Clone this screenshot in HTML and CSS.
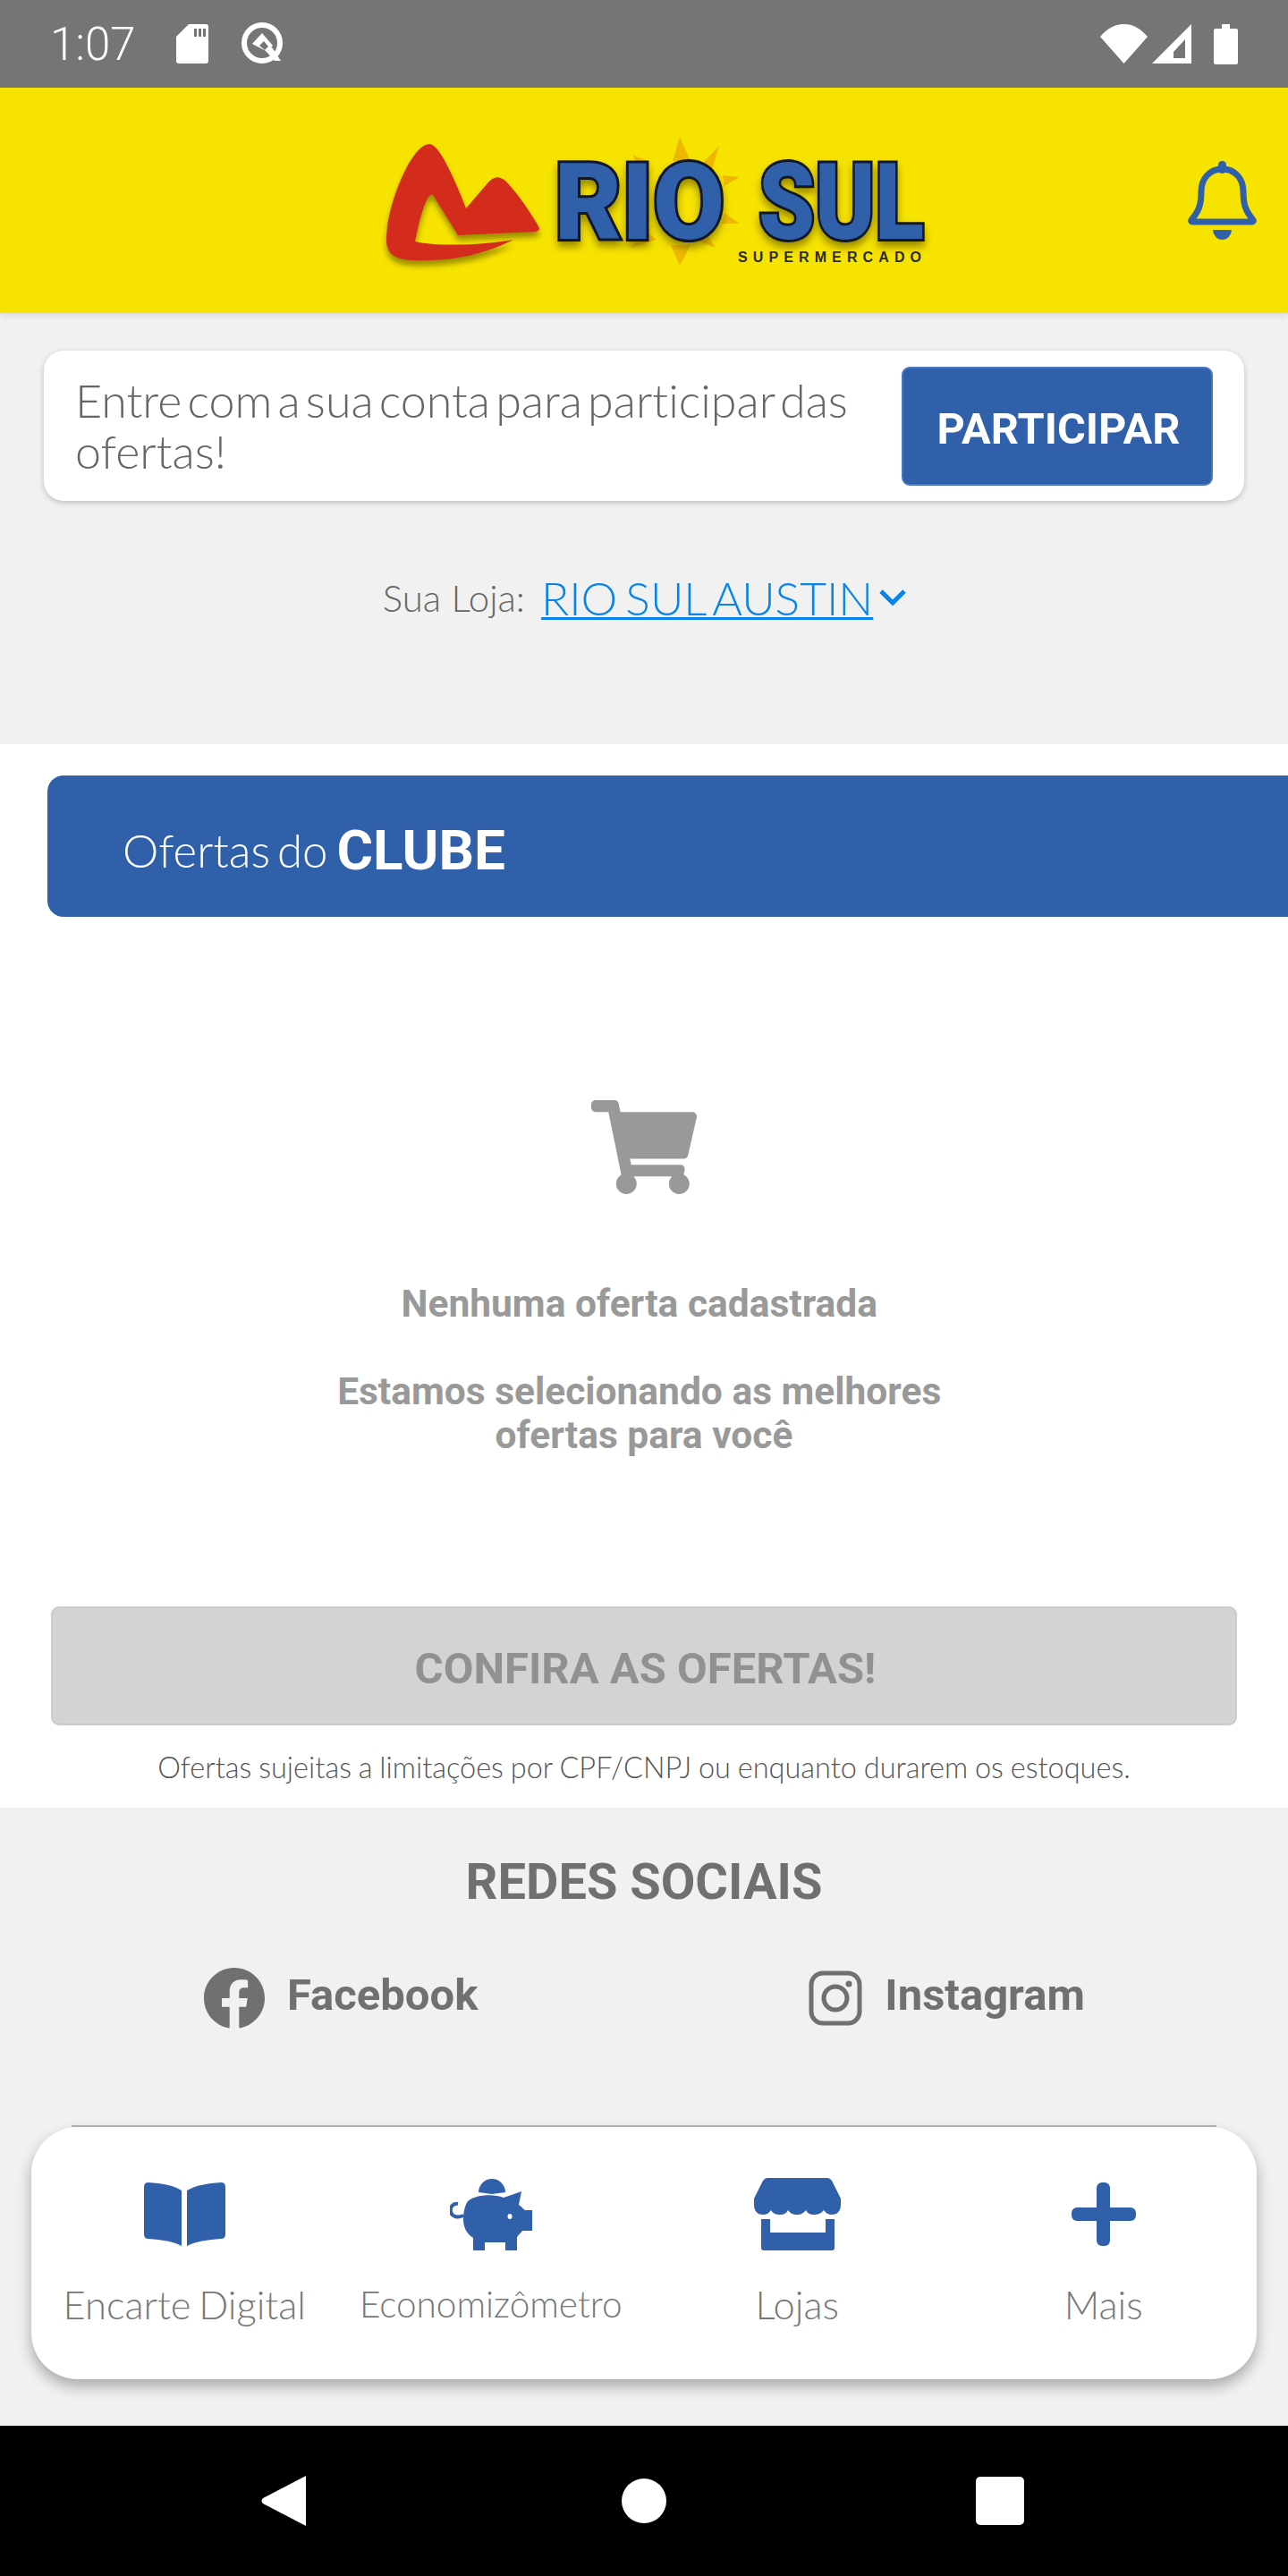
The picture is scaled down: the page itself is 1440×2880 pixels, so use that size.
FILE: index.html
```html
<!DOCTYPE html>
<html>
<head>
    <meta name="viewport" content="width=device-width, initial-scale=1.0">
    <title>Rio Sul Supermercado</title>
    <link rel="stylesheet" href="styles.css">
</head>
<body>
    <div class="statusbar">
        <span class="time">1:07</span>
        <svg class="sd-icon" viewBox="0 0 36 44"><path fill-rule="evenodd" d="M14 0H33a3 3 0 0 1 3 3V41a3 3 0 0 1-3 3H3a3 3 0 0 1-3-3V14zM20 5V14H23V5zM25 5V14H28V5zM30 5V14H33V5z" fill="#fff"/></svg>
        <svg class="q-icon" viewBox="0 0 50 50"><circle cx="25" cy="24" r="20" fill="none" stroke="#fff" stroke-width="6"/><path d="M25 13L37 27 31 34 14 25z" fill="#fff"/><path d="M22 27L27 22 32 28 28 32z" fill="#757575"/><path d="M29 33L39 44 46 44 36 29z" fill="#fff"/></svg>
        <div class="status-right">
            <svg class="wifi-icon" viewBox="0 0 53 44"><path d="M26.5 44L0 14C8 5 16 0 26.5 0S45 5 53 14z" fill="#fff"/></svg>
            <svg class="signal-icon" viewBox="0 0 44 44"><path fill-rule="evenodd" d="M44 0V44H0zM37 17L24 31V38H37z" fill="#fff"/></svg>
            <svg class="battery-icon" viewBox="0 0 27 45"><path d="M9 0H18V5H25a2 2 0 0 1 2 2V43a2 2 0 0 1-2 2H2a2 2 0 0 1-2-2V7a2 2 0 0 1 2-2H9z" fill="#fff"/></svg>
        </div>
    </div>

    <header class="topbar">
        <svg class="logo" viewBox="430 150 610 148">
            <defs>
                <filter id="soft" x="-10%" y="-20%" width="120%" height="140%"><feGaussianBlur stdDeviation="3"/></filter>
            </defs>
            <path d="M480 161C492 161 510 205 521 233L545 205C552 197 558 196 566 203C580 218 595 240 603 255Q604 258 598 259L512 263L484 218C478 214 470 240 464 270C490 276 540 274 574 268C550 280 520 290 480 291C450 292 432 290 432 268C432 230 460 161 480 161Z" transform="translate(0 6)" fill="#9c8f00" filter="url(#soft)"/>
            <g fill="#efb800">
                <path d="M752 180L760 153 772 180z"/>
                <path d="M786 182L804 163 796 190z"/>
                <path d="M808 196L827 198 810 208z"/>
                <path d="M810 238L827 250 806 250z"/>
                <path d="M790 262L800 277 782 270z"/>
                <path d="M750 274L760 297 772 274z"/>
                <path d="M722 258L705 277 734 268z"/>
                <path d="M724 180L707 173 718 192z"/>
            </g>
            <path d="M480 161C492 161 510 205 521 233L545 205C552 197 558 196 566 203C580 218 595 240 603 255Q604 258 598 259L512 263L484 218C478 214 470 240 464 270C490 276 540 274 574 268C550 280 520 290 480 291C450 292 432 290 432 268C432 230 460 161 480 161Z" fill="#d42c1c"/>
            <text class="logo-name" x="620" y="267" textLength="190" lengthAdjust="spacingAndGlyphs">RIO</text>
            <text class="logo-name" x="848" y="267" textLength="185" lengthAdjust="spacingAndGlyphs">SUL</text>
            <text class="logo-sub" x="825" y="293" textLength="205" lengthAdjust="spacing">SUPERMERCADO</text>
        </svg>
        <svg class="bell" viewBox="0 0 77 88">
            <path d="M38.500 9C24 9 15 20 15 34C15 50 12 56 4 66Q3 68 6 68H71Q74 68 73 66C65 56 62 50 62 34C62 20 53 9 38.500 9Z" fill="none" stroke="#3160aa" stroke-width="7" stroke-linejoin="round"/>
            <rect x="34" y="0" width="9" height="14" rx="4.500" fill="#3160aa"/>
            <path d="M28 77H49A10.500 11 0 0 1 28 77Z" fill="#3160aa"/>
        </svg>
    </header>

    <section class="account">
        <div class="login-card">
            <p>Entre com a sua conta para participar das ofertas!</p>
            <button class="btn-join">PARTICIPAR</button>
        </div>
        <div class="store-line">
            <span class="store-label">Sua Loja:</span>
            <a class="store-link">RIO SUL AUSTIN</a>
            <svg class="chevron" viewBox="0 0 32 20"><path d="M3 3L16 16 29 3" fill="none" stroke="#0a84e8" stroke-width="5"/></svg>
        </div>
    </section>

    <section class="offers">
        <div class="banner">
            <span class="banner-light">Ofertas do</span>
            <span class="banner-bold">CLUBE</span>
        </div>
        <div class="empty">
            <svg class="cart" viewBox="0 0 576 512"><path d="M528.12 301.319l47.273-208C578.806 78.301 567.391 64 551.99 64H159.208l-9.166-44.81C147.758 8.021 137.93 0 126.529 0H24C10.745 0 0 10.745 0 24v16c0 13.255 10.745 24 24 24h69.883l70.248 343.435C147.325 417.1 136 435.222 136 456c0 30.928 25.072 56 56 56s56-25.072 56-56c0-15.674-6.447-29.835-16.824-40h209.647C430.447 426.165 424 440.326 424 456c0 30.928 25.072 56 56 56s56-25.072 56-56c0-22.172-12.888-41.332-31.579-50.405l5.517-24.276c3.413-15.018-8.002-29.319-23.403-29.319H218.117l-6.545-32h293.145c11.206 0 20.92-7.754 23.403-18.681z" fill="#999"/></svg>
            <p class="empty-title">Nenhuma oferta cadastrada&nbsp;</p>
            <p class="empty-text">Estamos selecionando as melhores&nbsp;<br>ofertas para você</p>
        </div>
        <button class="btn-offers">CONFIRA AS OFERTAS!</button>
        <p class="disclaimer">Ofertas sujeitas a limitações por CPF/CNPJ ou enquanto durarem os estoques.</p>
    </section>

    <section class="social">
        <h2>REDES SOCIAIS</h2>
        <div class="social-links">
            <a class="social-link fb">
                <svg class="fb-icon" viewBox="8 8 496 496"><path d="M504 256C504 119 393 8 256 8S8 119 8 256c0 123.780 90.690 226.380 209.250 245V327.690h-63V256h63v-54.640c0-62.150 37-96.480 93.670-96.480 27.140 0 55.520 4.840 55.520 4.840v61h-31.280c-30.800 0-40.410 19.120-40.410 38.730V256h68.780l-11 71.690h-57.780V501C413.310 482.380 504 379.780 504 256z" fill="#707070"/></svg>
                <span>Facebook</span>
            </a>
            <a class="social-link ig">
                <svg class="ig-icon" viewBox="0 0 60 62"><rect x="3" y="3" width="54" height="56" rx="13" fill="none" stroke="#707070" stroke-width="5"/><circle cx="30" cy="31" r="13" fill="none" stroke="#707070" stroke-width="5"/><circle cx="45" cy="15" r="3.500" fill="#707070"/></svg>
                <span>Instagram</span>
            </a>
        </div>
        <div class="social-rule"></div>
    </section>

    <nav class="tabs">
        <a class="tab">
            <svg class="tab-icon" viewBox="0 -5 91 81"><path d="M5 0C20 1 33 3 42 9V71C33 66 20 64 5 63Q0 63 0 58V5Q0 0 5 0Z" fill="#3160aa"/><path d="M86 0C71 1 58 3 48 9V71C58 66 71 64 86 63Q91 63 91 58V5Q91 0 86 0Z" fill="#3160aa"/></svg>
            <span class="tab-wide">Encarte Digital</span>
        </a>
        <a class="tab">
            <svg class="tab-icon" viewBox="0 0 92 81"><path d="M32 16A15 15 0 0 1 62 16L47 18Z" fill="#3160aa"/><path d="M20 26C30 18 50 18 60 22L80 15 77 30C81 33 84 37 85 36H92V59H81C78 63 75 65 75 67V81H62V72H39V81H26V67C18 62 15 54 15 46C15 38 17 30 20 26Z" fill="#3160aa"/><path d="M9 29C3 28 0 33 1 38 2 43 8 45 15 42" fill="none" stroke="#3160aa" stroke-width="4"/><ellipse cx="67" cy="43" rx="2.500" ry="3" fill="#fff"/></svg>
            <span class="tab-small">Economizômetro</span>
        </a>
        <a class="tab">
            <svg class="tab-icon" viewBox="0 0 97 81"><path d="M15 0H82Q85 0 87 3L97 23V30C97 38 92 41 87 41 83 41 80 39 78 36 75 40 71 41 67 41 63 41 60 40 58 36 55 40 52 41 48 41 44 41 41 40 38 36 36 40 33 41 29 41 25 41 21 40 19 36 17 39 14 41 10 41 5 41 0 38 0 30V23L10 3Q12 0 15 0Z" fill="#3160aa"/><path d="M8 46H18V61H80V46H90V78Q90 81 87 81H11Q8 81 8 78Z" fill="#3160aa"/></svg>
            <span>Lojas</span>
        </a>
        <a class="tab">
            <svg class="tab-icon" viewBox="0 -5 72 81"><rect x="28" y="0" width="15" height="71" rx="6" fill="#3160aa"/><rect x="0" y="28" width="72" height="15" rx="6" fill="#3160aa"/></svg>
            <span>Mais</span>
        </a>
    </nav>

    <div class="navbar">
        <svg class="nav-back" viewBox="0 0 50 56"><path d="M50 0V56L2 31Q-1 28 2 25Z" fill="#fff"/></svg>
        <div class="nav-home"></div>
        <div class="nav-recent"></div>
    </div>
</body>
</html>
```

FILE: styles.css
```css
body {
    margin: 0;
    width: 1440px;
    height: 2880px;
    position: relative;
    overflow: hidden;
    display: flex;
    flex-direction: column;
    font-family: Lato, sans-serif;
    font-weight: 300;
    font-variant-ligatures: none;
    background-color: #f1f1f1;
}
p, h2 {
    margin: 0;
}
svg {
    display: block;
    flex: none;
}

.statusbar {
    height: 98px;
    background: #757575;
    display: flex;
    align-items: center;
    padding: 0 56px 0 56px;
    color: #fff;
}
.time {
    font-family: Roboto, sans-serif;
    font-size: 51px;
    font-weight: 300;
    width: 141px;
}
.sd-icon {
    width: 36px;
    height: 44px;
    margin-right: 35px;
}
.q-icon {
    width: 50px;
    height: 50px;
}
.status-right {
    margin-left: auto;
    display: flex;
    align-items: center;
}
.wifi-icon {
    width: 53px;
    height: 44px;
    margin-right: 5px;
}
.signal-icon {
    width: 44px;
    height: 44px;
    margin-right: 25px;
}
.battery-icon {
    width: 27px;
    height: 45px;
}

.topbar {
    height: 252px;
    background: #f7e300;
    display: flex;
    align-items: center;
    justify-content: space-between;
    padding: 0 35px 0 430px;
    box-shadow: 0 2px 8px rgba(0, 0, 0, 0.12);
    position: relative;
}
.logo {
    width: 610px;
    height: 148px;
    overflow: visible;
}
.logo-name {
    font-family: Roboto, sans-serif;
    font-weight: 900;
    font-size: 118px;
    fill: #3160aa;
    stroke: #101828;
    stroke-width: 6px;
    paint-order: stroke;
    filter: drop-shadow(0 6px 4px rgba(90, 80, 0, 0.6));
}
.logo-sub {
    font-family: "Liberation Sans Narrow", "Liberation Sans", sans-serif;
    font-weight: 700;
    font-size: 16px;
    fill: #2a2a20;
}
.bell {
    width: 77px;
    height: 88px;
}

.account {
    height: 482px;
    box-sizing: border-box;
    padding: 42px 49px 0;
}
.login-card {
    height: 168px;
    box-sizing: border-box;
    background: #fff;
    border-radius: 22px;
    box-shadow: 0 2px 6px rgba(0, 0, 0, 0.22);
    display: flex;
    align-items: center;
    justify-content: space-between;
    padding: 0 35px;
}
.login-card p {
    width: 890px;
    font-size: 52px;
    word-spacing: -8px;
    line-height: 57px;
    color: #666;
}
.btn-join {
    width: 348px;
    height: 133px;
    padding: 6px 0 0 3px;
    background: #3160aa;
    border: 2px solid #4a78c0;
    border-radius: 9px;
    color: #fff;
    font-family: Roboto, sans-serif;
    font-weight: 700;
    font-size: 48.700px;
}
.store-line {
    margin-top: 77px;
    display: flex;
    justify-content: center;
    align-items: center;
    margin-left: 2px;
}
.store-label {
    font-size: 42px;
    color: #666;
    margin-right: 18px;
}
.store-link {
    font-size: 51.500px;
    word-spacing: -5px;
    color: #0a84e8;
    text-decoration: underline;
    text-decoration-thickness: 3px;
}
.chevron {
    width: 32px;
    height: 20px;
    margin-left: 6px;
}

.offers {
    height: 1189px;
    background: #fff;
    box-sizing: border-box;
    padding-top: 35px;
}
.banner {
    margin-left: 53px;
    height: 158px;
    box-sizing: border-box;
    background: #3160aa;
    border-radius: 18px 0 0 18px;
    color: #fff;
    display: flex;
    align-items: center;
    padding: 8px 0 0 84px;
    gap: 10px;
}
.banner-light {
    font-size: 51px;
    word-spacing: -6px;
}
.banner-bold {
    font-family: Roboto, sans-serif;
    font-weight: 700;
    font-size: 62px;
}
.empty {
    display: flex;
    flex-direction: column;
    align-items: center;
    height: 771px;
    box-sizing: border-box;
    padding-top: 205px;
    font-family: Roboto, sans-serif;
    font-weight: 700;
    font-size: 42.500px;
    color: #999;
    text-align: center;
}
.cart {
    width: 118px;
    height: 105px;
}
.empty-title {
    margin-top: 98px;
    line-height: 49px;
}
.empty-text {
    margin-top: 49px;
    line-height: 49px;
}
.btn-offers {
    display: block;
    width: 1326px;
    height: 133px;
    margin: 0 0 0 57px;
    padding: 6px 0 0 3px;
    background: #d3d3d3;
    border: 2px solid #cbcbcb;
    border-radius: 9px;
    color: #919191;
    font-family: Roboto, sans-serif;
    font-weight: 700;
    font-size: 49px;
}
.disclaimer {
    margin-top: 27px;
    text-align: center;
    font-size: 32.500px;
    word-spacing: -1px;
    color: #555;
}

.social {
    flex: 1;
    display: flex;
    flex-direction: column;
    align-items: center;
    padding-top: 50px;
}
.social h2 {
    font-family: Roboto, sans-serif;
    font-weight: 700;
    font-size: 56px;
    color: #707070;
}
.social-links {
    width: 1440px;
    display: flex;
    margin-top: 63px;
}
.social-link {
    display: flex;
    align-items: center;
    font-family: Roboto, sans-serif;
    font-weight: 700;
    font-size: 49px;
    color: #707070;
}
.social-link span {
    margin-bottom: 8px;
}
.fb {
    margin-left: 228px;
    gap: 25px;
}
.ig {
    margin-left: 370px;
    gap: 25px;
}
.fb-icon {
    width: 68px;
    height: 68px;
}
.ig-icon {
    width: 60px;
    height: 62px;
}
.social-rule {
    width: 1280px;
    border-top: 2px solid #b5b5b5;
    margin-top: 108px;
}

/* floats over the social block */
.tabs {
    position: absolute;
    left: 35px;
    top: 2378px;
    width: 1370px;
    height: 282px;
    background: #fff;
    border-radius: 52px;
    box-shadow: 0 8px 16px rgba(0, 0, 0, 0.3);
    display: grid;
    grid-template-columns: repeat(4, 1fr);
}
.tab {
    display: flex;
    flex-direction: column;
    align-items: center;
    font-size: 43.500px;
    color: #777;
    padding-top: 57px;
}
.tab-icon {
    height: 81px;
}
.tab span {
    margin-top: 34px;
}
.tab .tab-wide {
    word-spacing: -3px;
}
.tab .tab-small {
    font-size: 40.500px;
    line-height: 52px;
}

.navbar {
    height: 168px;
    background: #000;
    display: flex;
    align-items: center;
    position: relative;
}
.nav-back {
    width: 50px;
    height: 56px;
    margin-left: 292px;
}
.nav-home {
    width: 50px;
    height: 50px;
    border-radius: 50%;
    background: #fff;
    margin-left: 353px;
}
.nav-recent {
    width: 54px;
    height: 54px;
    border-radius: 5px;
    background: #fff;
    margin-left: 346px;
}
```
